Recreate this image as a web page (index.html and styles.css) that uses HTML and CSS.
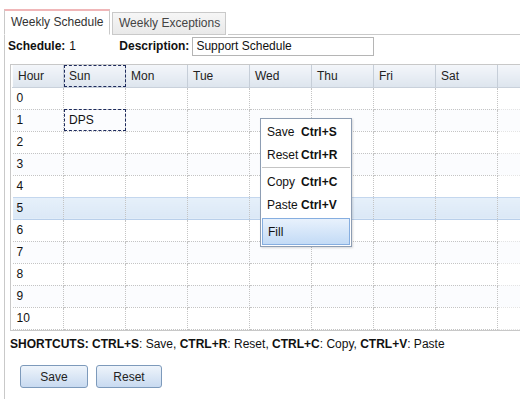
FILE: index.html
```html
<!doctype html>
<html>
<head>
<meta charset="utf-8">
<title>Weekly Schedule</title>
<link rel="stylesheet" href="styles.css">
</head>
<body>
<div class="tabs">
	<a class="tab active" href="#">Weekly Schedule</a>
	<a class="tab" href="#">Weekly Exceptions</a>
	<span class="tab-fill"></span>
</div>
<div class="panel">
	<div class="info">
		<b>Schedule:</b><span class="sched-id">1</span>
		<b class="desc-label">Description:</b><input class="desc" type="text" value="Support Schedule">
	</div>
	<div class="grid">
		<table>
			<colgroup>
				<col class="c-hour"><col class="c-day"><col class="c-day"><col class="c-day"><col class="c-day"><col class="c-day"><col class="c-day"><col class="c-day"><col class="c-fill">
			</colgroup>
			<thead>
				<tr><th>Hour</th><th class="focus">Sun</th><th>Mon</th><th>Tue</th><th>Wed</th><th>Thu</th><th>Fri</th><th>Sat</th><th></th></tr>
			</thead>
			<tbody>
				<tr><td>0</td><td></td><td></td><td></td><td></td><td></td><td></td><td></td><td class="blank"></td></tr>
				<tr class="alt"><td>1</td><td class="focus">DPS</td><td></td><td></td><td></td><td></td><td></td><td></td><td class="blank"></td></tr>
				<tr><td>2</td><td></td><td></td><td></td><td></td><td></td><td></td><td></td><td class="blank"></td></tr>
				<tr class="alt"><td>3</td><td></td><td></td><td></td><td></td><td></td><td></td><td></td><td class="blank"></td></tr>
				<tr><td>4</td><td></td><td></td><td></td><td></td><td></td><td></td><td></td><td class="blank"></td></tr>
				<tr class="sel"><td>5</td><td></td><td></td><td></td><td></td><td></td><td></td><td></td><td class="blank"></td></tr>
				<tr><td>6</td><td></td><td></td><td></td><td></td><td></td><td></td><td></td><td class="blank"></td></tr>
				<tr class="alt"><td>7</td><td></td><td></td><td></td><td></td><td></td><td></td><td></td><td class="blank"></td></tr>
				<tr><td>8</td><td></td><td></td><td></td><td></td><td></td><td></td><td></td><td class="blank"></td></tr>
				<tr class="alt"><td>9</td><td></td><td></td><td></td><td></td><td></td><td></td><td></td><td class="blank"></td></tr>
				<tr><td>10</td><td></td><td></td><td></td><td></td><td></td><td></td><td></td><td class="blank"></td></tr>
			</tbody>
		</table>
	</div>
	<p class="shortcuts"><b>SHORTCUTS: CTRL+S</b>: Save, <b>CTRL+R</b>: Reset, <b>CTRL+C</b>: Copy, <b>CTRL+V</b>: Paste</p>
	<div class="buttons">
		<button class="btn btn-save">Save</button>
		<button class="btn btn-reset">Reset</button>
	</div>
</div>

<ul class="menu">
	<li><span>Save</span><b>Ctrl+S</b></li>
	<li><span>Reset</span><b>Ctrl+R</b></li>
	<li class="sep"></li>
	<li><span>Copy</span><b>Ctrl+C</b></li>
	<li><span>Paste</span><b>Ctrl+V</b></li>
	<li class="fill"><span>Fill</span></li>
</ul>
</body>
</html>
```

FILE: styles.css
```css
* {padding:0;margin:0;box-sizing:border-box;}
body {font-family:"Liberation Sans", Arial, sans-serif;
	font-size:12px;
	color:#111;
	background:#fff;
	position:relative;
	height:399px;
	overflow:hidden;
}
.tabs {display:flex;
	align-items:flex-end;
	padding:9px 0 0 4px;
	height:35px;
}
.tab {display:block;
	flex-shrink:0;
	white-space:nowrap;
	padding:0 6px;
	font-size:12px;
	color:#444;
	text-decoration:none;
	border:1px solid #c9c9c9;
	background:linear-gradient(#f6f6f6,#e9e9e9);
	margin-right:2px;
	height:23px;
	line-height:21px;
}
.tab.active {height:26px;
	width:106px;
	background:#fff;
	color:#333;
	border-top:2px solid #f0b6b8;
	border-bottom-color:#fff;
	line-height:23px;
}
.tab + .tab {width:114px;}
.tab-fill {flex:1;border-bottom:1px solid #c9c9c9;height:1px;}
.panel {margin-left:4px;
	border-left:1px solid #c9c9c9;
	height:365px;
	margin-top:-1px;
}
.info {display:flex;
	align-items:center;
	height:30px;
	padding:0 0 6px 3px;
}
.info b {font-weight:bold;}
.sched-id {margin-left:4px;width:50px;}
.desc-label {margin-right:3px;}
.desc {width:182px;
	height:19px;
	border:1px solid #b5b5b5;
	font-family:"Liberation Sans", Arial, sans-serif;
	font-size:12px;
	padding:0 3px;
	color:#111;
}
.grid {margin-left:5px;
	border-top:1px solid #c8c8c8;
	border-left:1px solid #c8c8c8;
	border-bottom:1px solid #c8c8c8;
	padding-left:1px;
	height:267px;
}
table {border-collapse:collapse;table-layout:fixed;width:509px;}
.c-hour {width:51px;}
.c-day {width:62px;}
.c-fill {width:24px;}
th {height:22px;
	text-align:left;
	font-weight:normal;
	padding:0 5px;
	color:#222;
	background:linear-gradient(#f3f6fa,#dde5ee);
	border-right:1px solid #c6ced8;
	border-left:1px solid #fbfcfd;
	border-bottom:1px solid #c9d1db;
}
th:last-child {border-right:none;}
td {height:22px;
	padding:0 5px;
	border-right:1px dotted #c4c4c4;
	border-bottom:1px dotted #c4c4c4;
	color:#111;
}
td:first-child {padding-left:4px;}
td.blank {border-right:none;border-bottom:1px dotted #e4e4e4;}
tr.alt td {background:#fbfcfe;}
tr.sel td {background:linear-gradient(#e6f0fa,#dbe8f6);
	border-top:1px solid #c4d7ee;
	border-bottom:1px solid #b9cfea;
}
th.focus, td.focus {outline:1px dashed #1d2a5c;outline-offset:-1px;}
.shortcuts {padding:6px 0 0 5px;line-height:14px;}
.shortcuts b {font-weight:bold;}
.buttons {display:flex;padding:14px 0 0 15px;}
.btn {height:23px;
	border:1px solid #7d9abb;
	border-radius:3px;
	background:linear-gradient(#eef4fb,#c8daf0);
	font-family:"Liberation Sans", Arial, sans-serif;
	font-size:12px;
	color:#222;
	margin-right:8px;
}
.btn-save {width:68px;}
.btn-reset {width:66px;}
.menu {position:absolute;
	left:260px;
	top:118px;
	width:92px;
	list-style:none;
	background:#fff;
	border:1px solid #8d9db3;
	padding:1px;
	box-shadow:1px 1px 2px rgba(0,0,0,0.15);
}
.menu li {display:flex;
	height:23px;
	align-items:center;
	padding-left:5px;
	color:#111;
}
.menu li span {width:34px;}
.menu li b {font-weight:bold;}
.menu li.sep {height:3px;border-top:1px solid #c4c4c4;margin:1px 0 0;}
.menu li.fill {height:27px;
	border:1px solid #86aee0;
	background:linear-gradient(#e8f1fc,#c3dbf6);
	margin-top:2px;
}
```
